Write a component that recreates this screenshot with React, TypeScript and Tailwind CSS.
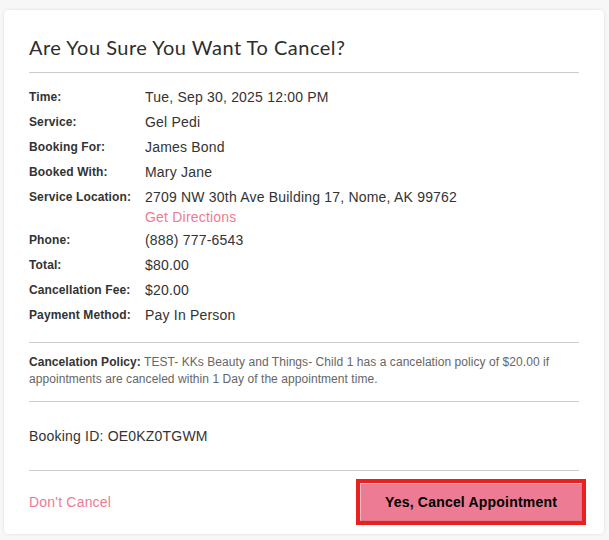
import React from "react";

const rows: { label: string; value: React.ReactNode }[] = [
  { label: "Time:", value: "Tue, Sep 30, 2025 12:00 PM" },
  { label: "Service:", value: "Gel Pedi" },
  { label: "Booking For:", value: "James Bond" },
  { label: "Booked With:", value: "Mary Jane" },
  {
    label: "Service Location:",
    value: (
      <div className="flex flex-col mb-[-2px]">
        <span>2709 NW 30th Ave Building 17, Nome, AK 99762</span>
        <span className="text-[#ee7b93] leading-[20px]">Get Directions</span>
      </div>
    ),
  },
  { label: "Phone:", value: "(888) 777-6543" },
  { label: "Total:", value: "$80.00" },
  { label: "Cancellation Fee:", value: "$20.00" },
  { label: "Payment Method:", value: "Pay In Person" },
];

export default function App() {
  return (
    <div className="min-h-[540px] w-[609px] bg-[#f7f7f7] pt-[10px] pl-[4px]" style={{ fontFamily: '"Liberation Sans", Arial, sans-serif' }}>
      <div className="w-[600px] h-[524px] bg-white rounded-[4px] shadow-[0_0_3px_rgba(0,0,0,0.12)] px-[25px] pt-[23px] flex flex-col">
        <h1 className="text-[20px] leading-[28px] text-[#2d2d2d] tracking-[0.5px]" style={{ fontFamily: 'Lato, "Open Sans", sans-serif' }}>
          Are You Sure You Want To Cancel?
        </h1>
        <div className="mt-[11px] h-px bg-[#cccccc]" />
        <div className="mt-[14px] flex flex-col gap-[5px]">
          {rows.map((r) => (
            <div key={r.label} className="flex items-start">
              <div className="w-[116px] shrink-0 text-[12px] font-bold text-[#333] leading-[20px] tracking-[0.12px]">{r.label}</div>
              <div className="text-[14px] leading-[20px] text-[#333] tracking-[0.2px]">{r.value}</div>
            </div>
          ))}
        </div>
        <div className="mt-[17px] h-px bg-[#cccccc]" />
        <p className="mt-[11px] text-[12px] leading-[17px] text-[#666] tracking-[0.06px]">
          <span className="font-bold text-[#333]">Cancelation Policy:</span> TEST- KKs Beauty and Things- Child 1 has a cancelation policy of $20.00 if appointments are canceled within 1 Day of the appointment time.
        </p>
        <div className="mt-[13px] h-px bg-[#cccccc]" />
        <div className="mt-[24px] text-[14px] leading-[20px] text-[#333] tracking-[0.2px]">Booking ID: OE0KZ0TGWM</div>
        <div className="mt-[24px] h-px bg-[#cccccc]" />
        <div className="mt-[12px] flex items-center justify-between mr-[-3px]">
          <span className="text-[14px] text-[#ee7b93] tracking-[0.2px]">Don't Cancel</span>
          <button className="w-[222px] h-[38px] bg-[#ec7b93] outline-4 outline-[#e8201e] border-t border-l border-[#f3c2cd] border-r border-b border-r-[#e3768d] border-b-[#e3768d] text-[14px] font-bold text-black tracking-[0.2px]">
            Yes, Cancel Appointment
          </button>
        </div>
      </div>
    </div>
  );
}
